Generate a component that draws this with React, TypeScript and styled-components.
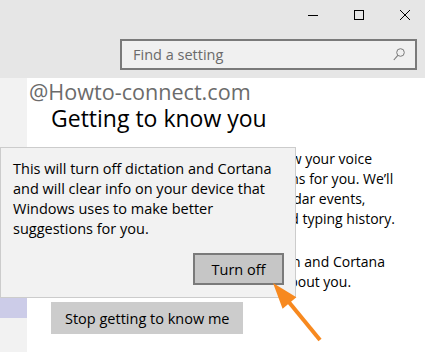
import { FC } from 'react'
import styled, { createGlobalStyle } from 'styled-components'

const GlobalStyle = createGlobalStyle`
  html, body {
    margin: 0;
    padding: 0;
    overflow: hidden;
  }
  body {
    font-family: 'Open Sans', 'Noto Sans', sans-serif;
    color: #000;
  }
`

const Window = styled.div`
  position: relative;
  width: 425px;
  height: 352px;
  overflow: hidden;
  background: #ffffff;
`

const TitleBar = styled.div`
  height: 78px;
  background: #e6e6e6;
  display: flex;
  flex-direction: column;
`

const Controls = styled.div`
  display: flex;
  justify-content: flex-end;
  height: 39px;
  margin-right: -3px;
`

const ControlButton = styled.div`
  width: 46px;
  height: 29px;
  display: flex;
  align-items: center;
  justify-content: center;
`

const SearchRow = styled.div`
  display: flex;
  justify-content: flex-end;
  padding-right: 8px;
`

const SearchBox = styled.div`
  box-sizing: border-box;
  width: 297px;
  height: 31px;
  border: 2px solid #7a7a7a;
  background: #f0f0f0;
  display: flex;
  align-items: center;
  justify-content: space-between;
  padding: 0 10px 0 11px;
  font-size: 14.5px;
  color: #6a6a6a;
`

const Main = styled.div`
  display: flex;
  height: 274px;
`

const Sidebar = styled.div`
  width: 27px;
  background: #f2f2f2;
  padding-top: 220px;
  box-sizing: border-box;
`

const SidebarItem = styled.div<{ selected?: boolean }>`
  height: 20px;
  background: ${(p) => (p.selected ? '#cccce8' : 'transparent')};
`

const Content = styled.div`
  flex: 1;
  padding-left: 24px;
  display: flex;
  flex-direction: column;
  align-items: flex-start;
`

const Heading = styled.h1`
  margin: 26px 0 0;
  font-size: 23px;
  line-height: 28px;
  font-weight: 400;
`

const Paragraph = styled.div<{ gap: number }>`
  margin-top: ${(p) => p.gap}px;
  font-size: 14px;
  line-height: 20px;
  white-space: nowrap;
`

const Line = styled.div``

const Button = styled.button`
  margin-top: 10px;
  height: 32px;
  padding: 0 14px;
  border: 0;
  background: #cccccc;
  font-family: inherit;
  font-size: 14.5px;
  color: #000;
`

const Watermark = styled.div`
  position: absolute;
  left: 29px;
  top: 78px;
  font-size: 21.6px;
  line-height: 28px;
  color: #6b6b6b;
`

const Flyout = styled.div`
  position: absolute;
  left: 0;
  top: 147px;
  box-sizing: border-box;
  width: 296px;
  height: 151px;
  background: #f2f2f2;
  border: 1px solid #cccccc;
  padding: 11px 11px 0 12px;
  display: flex;
  flex-direction: column;
  align-items: flex-end;
`

const FlyoutText = styled.div`
  align-self: stretch;
  font-size: 14.5px;
  line-height: 20px;
`

const FlyoutButton = styled.button`
  margin-top: 14px;
  box-sizing: border-box;
  width: 91px;
  height: 32px;
  border: 2px solid #7a7a7a;
  background: #c6c6c6;
  font-family: inherit;
  font-size: 14.5px;
  color: #000;
`

const Arrow = styled.svg`
  position: absolute;
  left: 0;
  top: 0;
  pointer-events: none;
`

const App: FC = () => {
  return (
    <Window>
      <GlobalStyle />
      <TitleBar>
        <Controls>
          <ControlButton>
            <svg width="10" height="10" viewBox="0 0 10 10">
              <line x1="0" y1="5.5" x2="10" y2="5.5" stroke="#000" strokeWidth="1" />
            </svg>
          </ControlButton>
          <ControlButton>
            <svg width="10" height="10" viewBox="0 0 10 10">
              <rect x="0.5" y="0.5" width="9" height="9" fill="none" stroke="#000" strokeWidth="1" />
            </svg>
          </ControlButton>
          <ControlButton>
            <svg width="10" height="10" viewBox="0 0 10 10">
              <path d="M0 0 L10 10 M10 0 L0 10" stroke="#000" strokeWidth="1" />
            </svg>
          </ControlButton>
        </Controls>
        <SearchRow>
          <SearchBox>
            <span>Find a setting</span>
            <svg width="12" height="13" viewBox="0 0 12 13">
              <circle cx="7.5" cy="4.5" r="3.8" fill="none" stroke="#7a7a7a" strokeWidth="1" />
              <path d="M4.8 7.3 L0.8 12" stroke="#7a7a7a" strokeWidth="1.1" />
            </svg>
          </SearchBox>
        </SearchRow>
      </TitleBar>
      <Main>
        <Sidebar>
          <SidebarItem selected />
        </Sidebar>
        <Content>
          <Heading>Getting to know you</Heading>
          <Paragraph gap={17}>
            <Line>Windows and Cortana can get to know your voice</Line>
            <Line>and writing to make better suggestions for you. We’ll</Line>
            <Line>collect info like contacts, recent calendar events,</Line>
            <Line>speech and handwriting patterns, and typing history.</Line>
          </Paragraph>
          <Paragraph gap={23}>
            <Line>Turning this off also turns off dictation and Cortana</Line>
            <Line>and clears what your device knows about you.</Line>
          </Paragraph>
          <Button type="button">Stop getting to know me</Button>
        </Content>
      </Main>
      <Watermark>@Howto-connect.com</Watermark>
      <Flyout>
        <FlyoutText>
          This will turn off dictation and Cortana and will clear info on your device that
          Windows uses to make better suggestions for you.
        </FlyoutText>
        <FlyoutButton type="button">Turn off</FlyoutButton>
      </Flyout>
      <Arrow width="425" height="352" viewBox="0 0 425 352">
        <line x1="320" y1="340" x2="288" y2="301" stroke="#f7891f" strokeWidth="4" />
        <polygon points="273,283 296.4,297.3 282.6,308.7" fill="#f7891f" />
      </Arrow>
    </Window>
  )
}

export default App
